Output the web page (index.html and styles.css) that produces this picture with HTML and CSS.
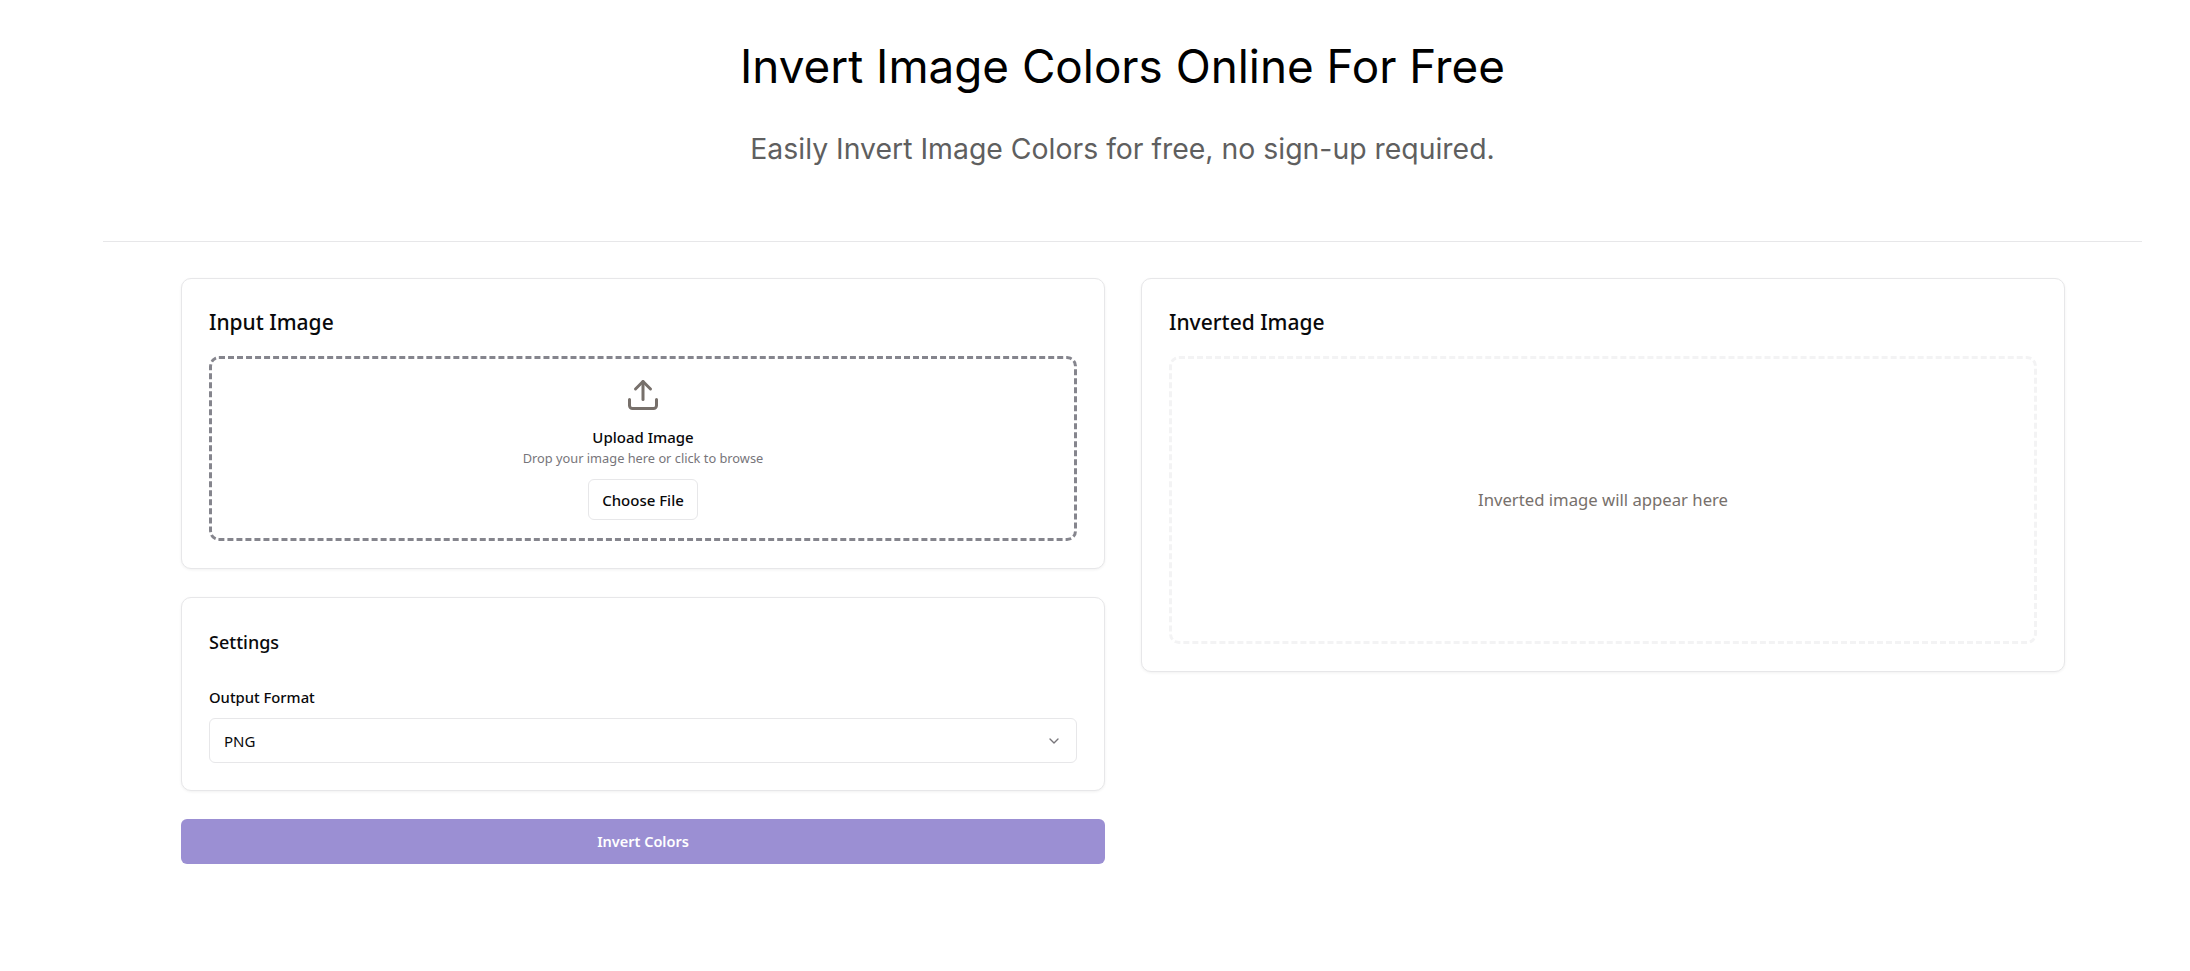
FILE: index.html
```html
<!DOCTYPE html>
<html lang="en">
<head>
  <meta charset="UTF-8">
  <title>Invert Image Colors Online For Free</title>
  <link rel="stylesheet" href="styles.css">
</head>
<body>
  <div class="page">
    <header class="page-header">
      <h1>Invert Image Colors Online For Free</h1>
      <p>Easily Invert Image Colors for free, no sign-up required.</p>
    </header>

    <main class="tool">
      <div class="column">
        <!-- Input -->
        <section class="card">
          <h2>Input Image</h2>
          <div class="dropzone">
            <svg class="upload-icon" viewBox="0 0 24 24" width="36" height="36" fill="none" stroke="currentColor" stroke-width="2" stroke-linecap="round" stroke-linejoin="round">
              <path d="M21 15v4a2 2 0 0 1-2 2H5a2 2 0 0 1-2-2v-4"/>
              <path d="M17 8l-5-5-5 5"/>
              <path d="M12 3v12"/>
            </svg>
            <div class="upload-title">Upload Image</div>
            <div class="upload-hint">Drop your image here or click to browse</div>
            <button class="file-btn">Choose File</button>
          </div>
        </section>

        <!-- Settings -->
        <section class="card settings">
          <h3>Settings</h3>
          <label class="field-label">Output Format</label>
          <div class="select">
            <span>PNG</span>
            <svg viewBox="0 0 24 24" width="16" height="16" fill="none" stroke="#77757a" stroke-width="2" stroke-linecap="round" stroke-linejoin="round">
              <path d="M6 9l6 6 6-6"/>
            </svg>
          </div>
        </section>

        <button class="invert-btn">Invert Colors</button>
      </div>

      <div class="column">
        <section class="card">
          <h2>Inverted Image</h2>
          <div class="result">Inverted image will appear here</div>
        </section>
      </div>
    </main>
  </div>
</body>
</html>
```

FILE: styles.css
```css
* {
  box-sizing: border-box;
}

body {
  margin: 0;
  background-color: #fff;
  color: #09090b;
  font-family: "Noto Sans", "Open Sans", sans-serif;
}

.page {
  width: 2039px;
  margin-left: 103px;
}

.page-header {
  height: 242px;
  padding-top: 37px;
  border-bottom: 1px solid #e7e7e9;
  text-align: center;
}

.page-header h1 {
  margin: 0;
  font-family: Inter, sans-serif;
  font-size: 45.8px;
  line-height: 60px;
  font-weight: 400;
  color: #000;
}

.page-header p {
  margin: 34px 0 0;
  font-family: Inter, sans-serif;
  font-size: 28.4px;
  line-height: 36px;
  font-weight: 400;
  color: #5f5f5f;
}

.tool {
  display: grid;
  grid-template-columns: 924px 924px;
  gap: 36px;
  padding: 36px 78px 0;
}

.column {
  display: flex;
  flex-direction: column;
  gap: 28px;
}

.card {
  padding: 27px;
  border: 1px solid #e7e7e9;
  border-radius: 10px;
  box-shadow: 0 1px 3px rgba(0, 0, 0, 0.06);
  background-color: #fff;
}

.card h2 {
  margin: 1px 0 19px;
  font-size: 21px;
  line-height: 30px;
  font-weight: 500;
}

.card h3 {
  margin: 2px 0 30px;
  font-size: 18px;
  line-height: 30px;
  font-weight: 500;
}

.dropzone {
  display: flex;
  flex-direction: column;
  align-items: center;
  height: 185px;
  padding-top: 18px;
  border: 3px dashed #85858d;
  border-radius: 10px;
}

.upload-icon {
  color: #77706b;
}

.upload-title {
  margin-top: 13px;
  font-size: 15px;
  line-height: 22px;
  font-weight: 500;
}

.upload-hint {
  font-size: 12.8px;
  line-height: 20px;
  color: #77757a;
}

.file-btn {
  height: 41px;
  margin-top: 11px;
  padding: 0 13px;
  border: 1px solid #e7e7e9;
  border-radius: 6px;
  background-color: #fff;
  color: #09090b;
  font-family: inherit;
  font-size: 15px;
  font-weight: 500;
}

.field-label {
  display: block;
  margin-bottom: 11px;
  font-size: 14.8px;
  line-height: 20px;
  font-weight: 500;
}

.select {
  display: flex;
  align-items: center;
  justify-content: space-between;
  height: 45px;
  padding: 0 14px;
  border: 1px solid #e7e7e9;
  border-radius: 6px;
  font-size: 15px;
}

.invert-btn {
  height: 45px;
  padding-bottom: 2px;
  border: none;
  border-radius: 6px;
  background-color: #9b8fd3;
  color: #fff;
  font-family: inherit;
  font-size: 14.5px;
  font-weight: 600;
}

.result {
  display: flex;
  align-items: center;
  justify-content: center;
  height: 288px;
  padding-bottom: 2px;
  border: 3px dashed #f3f3f4;
  border-radius: 10px;
  font-size: 16.7px;
  color: #77706b;
}
```
